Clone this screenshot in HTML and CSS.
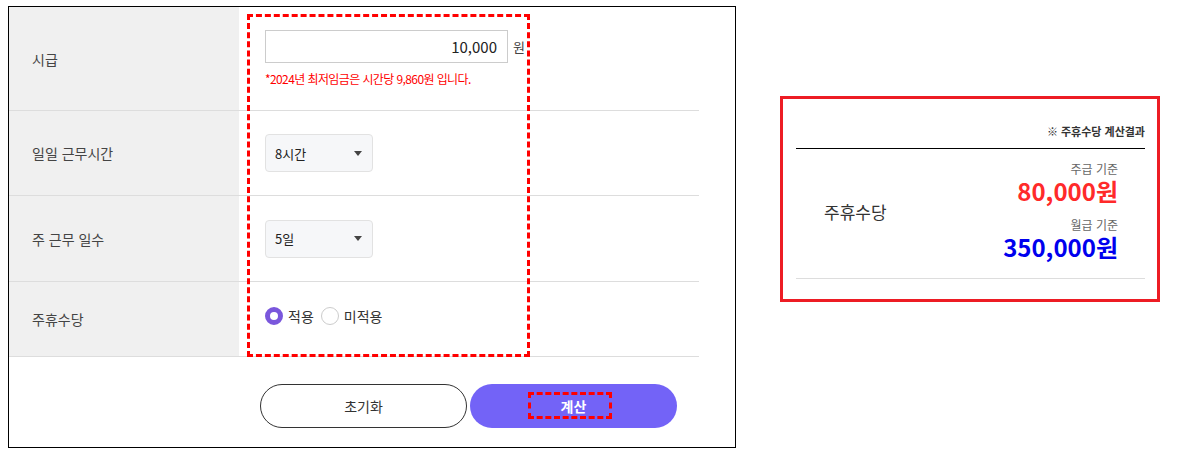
FILE: index.html
```html
<!DOCTYPE html>
<html lang="ko">
<head>
    <meta charset="UTF-8">
    <meta name="viewport" content="width=device-width, initial-scale=1.0">
    <title>주휴수당 계산기</title>
    <link rel="stylesheet" href="styles.css">
</head>
<body>
    <div class="page">
        <section class="calc">
            <div class="form-table">
                <div class="row row-wage">
                    <div class="th">시급</div>
                    <div class="td">
                        <div class="wage-line">
                            <input type="text" class="wage-input" value="10,000">
                            <span class="unit">원</span>
                        </div>
                        <p class="note">*2024년 최저임금은 시간당 9,860원 입니다.</p>
                    </div>
                </div>
                <div class="row row-hours">
                    <div class="th">일일 근무시간</div>
                    <div class="td">
                        <div class="select">8시간<span class="caret"></span></div>
                    </div>
                </div>
                <div class="row row-days">
                    <div class="th">주 근무 일수</div>
                    <div class="td">
                        <div class="select">5일<span class="caret"></span></div>
                    </div>
                </div>
                <div class="row row-allow">
                    <div class="th">주휴수당</div>
                    <div class="td">
                        <label class="radio"><span class="dot checked"></span>적용</label>
                        <label class="radio"><span class="dot"></span>미적용</label>
                    </div>
                </div>
            </div>
            <div class="mark mark-fields"></div>

            <div class="actions">
                <button type="button" class="btn btn-reset">초기화</button>
                <button type="button" class="btn btn-calc">계산<span class="mark mark-btn"></span></button>
            </div>
        </section>

        <aside class="result">
            <div class="result-title">※ 주휴수당 계산결과</div>
            <div class="result-body">
                <div class="result-label">주휴수당</div>
                <div class="result-values">
                    <div class="basis">주급 기준</div>
                    <div class="amount amount-week">80,000원</div>
                    <div class="basis basis-month">월급 기준</div>
                    <div class="amount amount-month">350,000원</div>
                </div>
            </div>
        </aside>
    </div>
</body>
</html>
```

FILE: styles.css
```css
body {
    margin: 0;
    font-family: "Noto Sans CJK KR", "Noto Sans", sans-serif;
    color: #333;
    background: #fff;
}
.page {
    display: flex;
    align-items: flex-start;
}

/* left: calculator form */
.calc {
    position: relative;
    box-sizing: border-box;
    width: 728px;
    height: 442px;
    margin: 6px 0 0 8px;
    border: 1px solid #000;
}
.form-table {
    width: 690px;
}
.row {
    display: flex;
    box-sizing: border-box;
    border-bottom: 1px solid #ddd;
}
.row-wage { height: 104px; }
.row-hours { height: 85px; }
.row-days { height: 86px; }
.row-allow { height: 75px; }
.th {
    width: 230px;
    padding-left: 23px;
    box-sizing: border-box;
    background: #f0f0f0;
    display: flex;
    align-items: center;
    font-size: 14px;
    color: #444;
}
.td {
    flex: 1;
    padding-left: 26px;
    display: flex;
    align-items: center;
}
.row-wage .td {
    flex-direction: column;
    align-items: flex-start;
    justify-content: flex-start;
    padding-top: 23px;
}
.wage-line {
    display: flex;
    align-items: center;
}
.wage-input {
    box-sizing: border-box;
    width: 243px;
    height: 33px;
    border: 1px solid #ccc;
    padding: 0 10px;
    text-align: right;
    font-family: inherit;
    font-size: 15px;
    color: #222;
}
.unit {
    margin-left: 5px;
    font-size: 13px;
    color: #444;
}
.note {
    margin: 8px 0 0;
    font-size: 12px;
    line-height: 16px;
    letter-spacing: -0.6px;
    color: #f00;
}
.select {
    box-sizing: border-box;
    width: 108px;
    height: 38px;
    padding: 0 10px 0 9px;
    display: flex;
    align-items: center;
    justify-content: space-between;
    background: #f6f7f9;
    border: 1px solid #e2e2e2;
    border-radius: 4px;
    font-size: 13px;
    color: #222;
}
.caret {
    width: 0;
    height: 0;
    border-left: 4.5px solid transparent;
    border-right: 4.5px solid transparent;
    border-top: 5px solid #444;
}
.row-allow .td {
    padding-bottom: 6px;
}
.radio {
    display: flex;
    align-items: center;
    margin-right: 7px;
    font-size: 14px;
    color: #333;
}
.dot {
    box-sizing: border-box;
    width: 18px;
    height: 18px;
    margin-right: 5px;
    border: 1px solid #ccc;
    border-radius: 50%;
    background: #fff;
}
.dot.checked {
    border: 5px solid #7a57dc;
}

/* red dotted annotations */
.mark {
    position: absolute;
    box-sizing: border-box;
    border: 3px dashed #f00;
}
.mark-fields {
    left: 238px;
    top: 7px;
    width: 283px;
    height: 343px;
}
.mark-btn {
    left: 58px;
    top: 8px;
    width: 84px;
    height: 27px;
}

.actions {
    display: flex;
    gap: 3px;
    padding: 27px 0 0 251px;
}
.btn {
    position: relative;
    box-sizing: border-box;
    width: 207px;
    height: 44px;
    border-radius: 22px;
    font-family: inherit;
    font-size: 14px;
    cursor: pointer;
}
.btn-reset {
    border: 1px solid #333;
    background: #fff;
    color: #333;
}
.btn-calc {
    border: none;
    background: #7363f7;
    color: #fff;
    font-weight: bold;
}

/* right: result box */
.result {
    box-sizing: border-box;
    width: 380px;
    height: 206px;
    margin: 96px 0 0 44px;
    padding: 24px 12px 0 13px;
    border: 3px solid #ed1c24;
}
.result-title {
    padding-bottom: 9px;
    border-bottom: 1px solid #000;
    text-align: right;
    font-size: 11px;
    line-height: 16px;
    font-weight: bold;
    color: #333;
}
.result-body {
    display: flex;
    align-items: center;
    justify-content: space-between;
    padding: 12px 27px 17px 28px;
    border-bottom: 1px solid #ddd;
}
.result-label {
    font-size: 17px;
    color: #333;
}
.result-values {
    text-align: right;
}
.basis {
    font-size: 12px;
    line-height: 16px;
    color: #666;
}
.basis-month {
    margin-top: 12px;
}
.amount {
    font-size: 24px;
    line-height: 28px;
    font-weight: bold;
}
.amount-week { color: #ff2a2a; }
.amount-month { color: #0000ee; }
```
